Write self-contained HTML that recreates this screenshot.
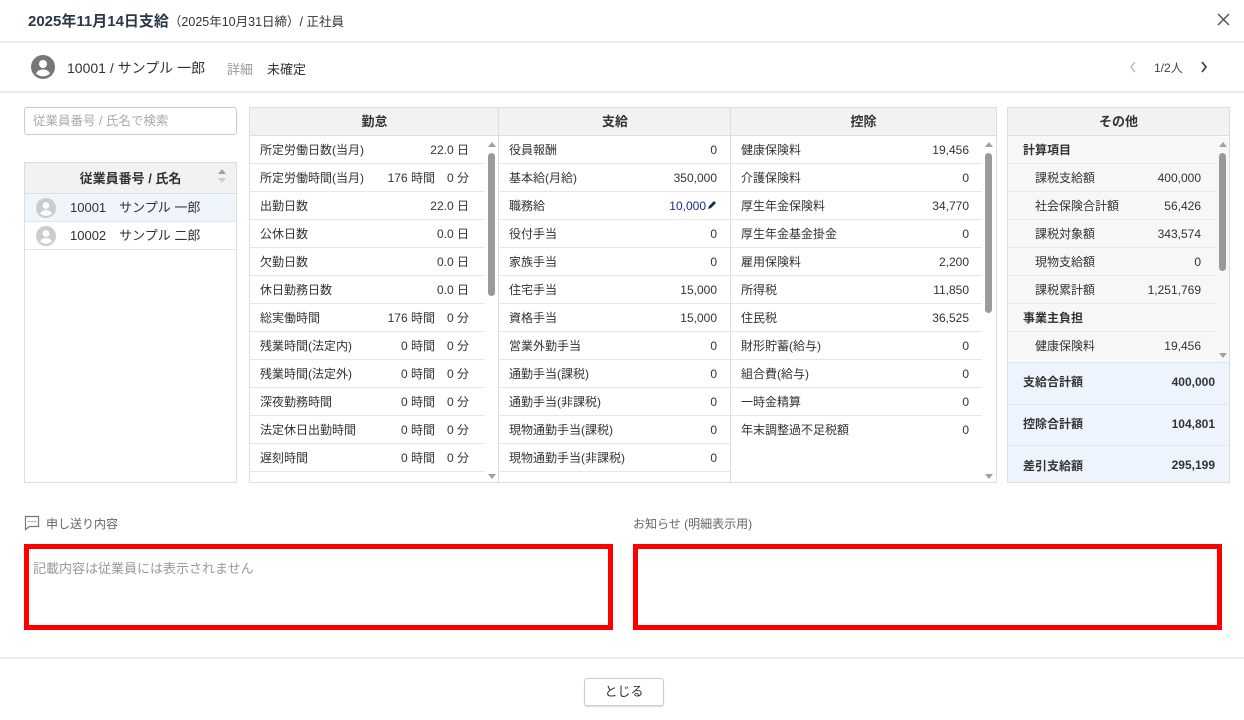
<!DOCTYPE html>
<html><head><meta charset="utf-8"><style>
*{box-sizing:border-box;margin:0;padding:0}
body{width:1244px;height:720px;background:#fff;font-family:"Liberation Sans","Noto Sans CJK JP",sans-serif;color:#333;position:relative;overflow:hidden}
.a{position:absolute}
.hl{position:absolute;left:0;width:1244px;height:2px;background:#ececec}
.col{position:absolute;top:107px;border:1px solid #ddd;background:#fff;overflow:hidden}
.th{height:28px;background:#f2f2f2;border-bottom:1px solid #ddd;text-align:center;font-size:13px;font-weight:bold;line-height:28px;color:#333}
.r{position:relative;height:28px;border-bottom:1px solid #e6e6e6;font-size:12px;line-height:29px}
.r .l{position:absolute;left:10px}
.r .v{position:absolute;text-align:right}
.sb{position:absolute;width:14px;background:#fff}
.sb .t{position:absolute;left:3px;width:7px;background:#9a9a9a;border-radius:4px}
.up,.dn{position:absolute;left:3px;width:0;height:0;border-left:4px solid transparent;border-right:4px solid transparent}
.up{border-bottom:5px solid #a0a0a0}.dn{border-top:5px solid #a0a0a0}
.o{background:#f7f7f7}
.s{position:absolute;left:0;width:222px;background:#eef4fd;border-top:1px solid #dde6f2;font-size:12px;font-weight:bold}
</style></head><body>
<div class="a" style="left:28px;top:10px;font-size:15px;font-weight:bold;color:#2b3648">2025年11月14日支給<span style="font-size:12.5px;font-weight:normal;color:#333">（2025年10月31日締）/ 正社員</span></div>
<svg class="a" style="left:1217px;top:13px" width="13" height="13" viewBox="0 0 13 13"><path d="M1 1l11 11M12 1L1 12" stroke="#555" stroke-width="1.5"/></svg>
<div class="hl" style="top:41px"></div>
<svg class="a" style="left:31px;top:55px" width="24" height="24" viewBox="0 0 24 24"><circle cx="12" cy="12" r="12" fill="#777"/><circle cx="12" cy="9" r="4" fill="#fff"/><path d="M5 18.5c1.5-3 4-4 7-4s5.5 1 7 4a10 10 0 0 1-14 0z" fill="#fff"/></svg>
<div class="a" style="left:67px;top:58px;font-size:14px;color:#333">10001 / サンプル 一郎</div>
<div class="a" style="left:227px;top:59px;font-size:13px;color:#999">詳細</div>
<div class="a" style="left:267px;top:59px;font-size:13px;color:#333">未確定</div>
<svg class="a" style="left:1129px;top:61px" width="8" height="12" viewBox="0 0 8 12"><path d="M6 1L2 6l4 5" fill="none" stroke="#bbb" stroke-width="1.5"/></svg>
<div class="a" style="left:1154px;top:59px;font-size:12px;color:#444">1/2人</div>
<svg class="a" style="left:1200px;top:61px" width="8" height="12" viewBox="0 0 8 12"><path d="M2 1l4 5-4 5" fill="none" stroke="#444" stroke-width="1.8"/></svg>
<div class="hl" style="top:91px"></div>

<div class="a" style="left:24px;top:107px;width:213px;height:28px;border:1px solid #ccc;border-radius:3px;font-size:12.5px;color:#aaa;line-height:26px;padding-left:8px">従業員番号 / 氏名で検索</div>
<div class="a" style="left:24px;top:162px;width:213px;height:321px;border:1px solid #ddd">
<div style="height:31px;background:#f2f2f2;border-bottom:1px solid #ddd;text-align:center;font-size:13px;font-weight:bold;line-height:31px">従業員番号 / 氏名</div>
<div class="up" style="left:193px;top:6px"></div><div class="dn" style="left:193px;top:15px;border-top-color:#ccc"></div>
<div style="height:28px;background:#eef5fd;border-bottom:1px solid #e6e6e6;font-size:13px;line-height:28px;position:relative"><svg class="a" style="left:11px;top:4px" width="20" height="20" viewBox="0 0 24 24"><circle cx="12" cy="12" r="12" fill="#ccc"/><circle cx="12" cy="9" r="4" fill="#fff"/><path d="M5 18.5c1.5-3 4-4 7-4s5.5 1 7 4a10 10 0 0 1-14 0z" fill="#fff"/></svg><span style="position:absolute;left:45px">10001　サンプル 一郎</span></div>
<div style="height:28px;border-bottom:1px solid #e6e6e6;font-size:13px;line-height:28px;position:relative"><svg class="a" style="left:11px;top:4px" width="20" height="20" viewBox="0 0 24 24"><circle cx="12" cy="12" r="12" fill="#ccc"/><circle cx="12" cy="9" r="4" fill="#fff"/><path d="M5 18.5c1.5-3 4-4 7-4s5.5 1 7 4a10 10 0 0 1-14 0z" fill="#fff"/></svg><span style="position:absolute;left:45px">10002　サンプル 二郎</span></div>
</div>

<!-- 勤怠 -->
<div class="col" style="left:249px;width:250px;height:376px;border-right:none">
<div class="th">勤怠</div>
<div style="width:235px">
<div class="r"><span class="l">所定労働日数(当月)</span><span class="v" style="right:16px">22.0 日</span></div>
<div class="r"><span class="l">所定労働時間(当月)</span><span class="v" style="right:16px">176 時間　0 分</span></div>
<div class="r"><span class="l">出勤日数</span><span class="v" style="right:16px">22.0 日</span></div>
<div class="r"><span class="l">公休日数</span><span class="v" style="right:16px">0.0 日</span></div>
<div class="r"><span class="l">欠勤日数</span><span class="v" style="right:16px">0.0 日</span></div>
<div class="r"><span class="l">休日勤務日数</span><span class="v" style="right:16px">0.0 日</span></div>
<div class="r"><span class="l">総実働時間</span><span class="v" style="right:16px">176 時間　0 分</span></div>
<div class="r"><span class="l">残業時間(法定内)</span><span class="v" style="right:16px">0 時間　0 分</span></div>
<div class="r"><span class="l">残業時間(法定外)</span><span class="v" style="right:16px">0 時間　0 分</span></div>
<div class="r"><span class="l">深夜勤務時間</span><span class="v" style="right:16px">0 時間　0 分</span></div>
<div class="r"><span class="l">法定休日出勤時間</span><span class="v" style="right:16px">0 時間　0 分</span></div>
<div class="r"><span class="l">遅刻時間</span><span class="v" style="right:16px">0 時間　0 分</span></div>
</div>
<div class="sb" style="left:235px;top:29px;height:346px"><div class="up" style="top:5px"></div><div class="t" style="top:16px;height:143px"></div><div class="dn" style="top:337px"></div></div>
</div>
<!-- 支給 -->
<div class="col" style="left:498px;width:233px;height:376px;border-right:none">
<div class="th">支給</div>
<div class="r"><span class="l">役員報酬</span><span class="v" style="right:14px">0</span></div>
<div class="r"><span class="l">基本給(月給)</span><span class="v" style="right:14px">350,000</span></div>
<div class="r"><span class="l">職務給</span><span class="v" style="right:14px;color:#1a2a8a">10,000<svg width="10" height="10" viewBox="0 0 10 10" style="margin-left:1px"><path d="M1 9l1-3 5-5 2 2-5 5z" fill="#1a2a5a"/></svg></span></div>
<div class="r"><span class="l">役付手当</span><span class="v" style="right:14px">0</span></div>
<div class="r"><span class="l">家族手当</span><span class="v" style="right:14px">0</span></div>
<div class="r"><span class="l">住宅手当</span><span class="v" style="right:14px">15,000</span></div>
<div class="r"><span class="l">資格手当</span><span class="v" style="right:14px">15,000</span></div>
<div class="r"><span class="l">営業外勤手当</span><span class="v" style="right:14px">0</span></div>
<div class="r"><span class="l">通勤手当(課税)</span><span class="v" style="right:14px">0</span></div>
<div class="r"><span class="l">通勤手当(非課税)</span><span class="v" style="right:14px">0</span></div>
<div class="r"><span class="l">現物通勤手当(課税)</span><span class="v" style="right:14px">0</span></div>
<div class="r"><span class="l">現物通勤手当(非課税)</span><span class="v" style="right:14px">0</span></div>
</div>
<!-- 控除 -->
<div class="col" style="left:730px;width:267px;height:376px">
<div class="th">控除</div>
<div style="width:251px">
<div class="r"><span class="l">健康保険料</span><span class="v" style="right:13px">19,456</span></div>
<div class="r"><span class="l">介護保険料</span><span class="v" style="right:13px">0</span></div>
<div class="r"><span class="l">厚生年金保険料</span><span class="v" style="right:13px">34,770</span></div>
<div class="r"><span class="l">厚生年金基金掛金</span><span class="v" style="right:13px">0</span></div>
<div class="r"><span class="l">雇用保険料</span><span class="v" style="right:13px">2,200</span></div>
<div class="r"><span class="l">所得税</span><span class="v" style="right:13px">11,850</span></div>
<div class="r"><span class="l">住民税</span><span class="v" style="right:13px">36,525</span></div>
<div class="r"><span class="l">財形貯蓄(給与)</span><span class="v" style="right:13px">0</span></div>
<div class="r"><span class="l">組合費(給与)</span><span class="v" style="right:13px">0</span></div>
<div class="r"><span class="l">一時金精算</span><span class="v" style="right:13px">0</span></div>
<div class="r" style="border-bottom:none"><span class="l">年末調整過不足税額</span><span class="v" style="right:13px">0</span></div>
</div>
<div class="sb" style="left:251px;top:29px;height:346px"><div class="up" style="top:5px"></div><div class="t" style="top:16px;height:160px"></div><div class="dn" style="top:337px"></div></div>
</div>
<!-- その他 -->
<div class="col" style="left:1007px;width:223px;height:376px">
<div class="th">その他</div>
<div style="width:208px" class="o">
<div class="r"><span class="l" style="left:15px;font-weight:bold">計算項目</span></div>
<div class="r"><span class="l" style="left:27px">課税支給額</span><span class="v" style="right:15px">400,000</span></div>
<div class="r"><span class="l" style="left:27px">社会保険合計額</span><span class="v" style="right:15px">56,426</span></div>
<div class="r"><span class="l" style="left:27px">課税対象額</span><span class="v" style="right:15px">343,574</span></div>
<div class="r"><span class="l" style="left:27px">現物支給額</span><span class="v" style="right:15px">0</span></div>
<div class="r"><span class="l" style="left:27px">課税累計額</span><span class="v" style="right:15px">1,251,769</span></div>
<div class="r"><span class="l" style="left:15px;font-weight:bold">事業主負担</span></div>
<div class="r" style="border-bottom:none"><span class="l" style="left:27px">健康保険料</span><span class="v" style="right:15px">19,456</span></div>
</div>
<div class="sb" style="left:208px;top:29px;height:225px;background:#f7f7f7"><div class="up" style="top:5px"></div><div class="t" style="top:16px;height:118px"></div><div class="dn" style="top:216px"></div></div>
<div class="s" style="top:254px;height:42px"><span class="a" style="left:15px;top:10px">支給合計額</span><span class="a" style="right:15px;top:12px">400,000</span></div>
<div class="s" style="top:296px;height:41px"><span class="a" style="left:15px;top:10px">控除合計額</span><span class="a" style="right:15px;top:12px">104,801</span></div>
<div class="s" style="top:337px;height:40px"><span class="a" style="left:15px;top:11px">差引支給額</span><span class="a" style="right:15px;top:12px">295,199</span></div>
</div>

<svg class="a" style="left:24px;top:515px" width="16" height="16" viewBox="0 0 16 16"><path d="M1.5 1.5h13v10h-9l-4 3z" fill="none" stroke="#777" stroke-width="1.2"/><circle cx="5" cy="6.5" r=".8" fill="#777"/><circle cx="8" cy="6.5" r=".8" fill="#777"/><circle cx="11" cy="6.5" r=".8" fill="#777"/></svg>
<div class="a" style="left:46px;top:515px;font-size:12px;color:#666">申し送り内容</div>
<div class="a" style="left:633px;top:515px;font-size:12px;color:#666">お知らせ (明細表示用)</div>
<div class="a" style="left:24px;top:544px;width:589px;height:86px;border:5px solid #f00;font-size:13px;color:#999;padding:9px 4px">記載内容は従業員には表示されません</div>
<div class="a" style="left:633px;top:544px;width:589px;height:86px;border:5px solid #f00"></div>
<div class="hl" style="top:657px"></div>
<div class="a" style="left:584px;top:678px;width:80px;height:28px;border:1px solid #ccc;border-radius:3px;text-align:center;line-height:26px;font-size:13px;color:#333;box-shadow:0 1px 1px #ddd">とじる</div>
</body></html>
